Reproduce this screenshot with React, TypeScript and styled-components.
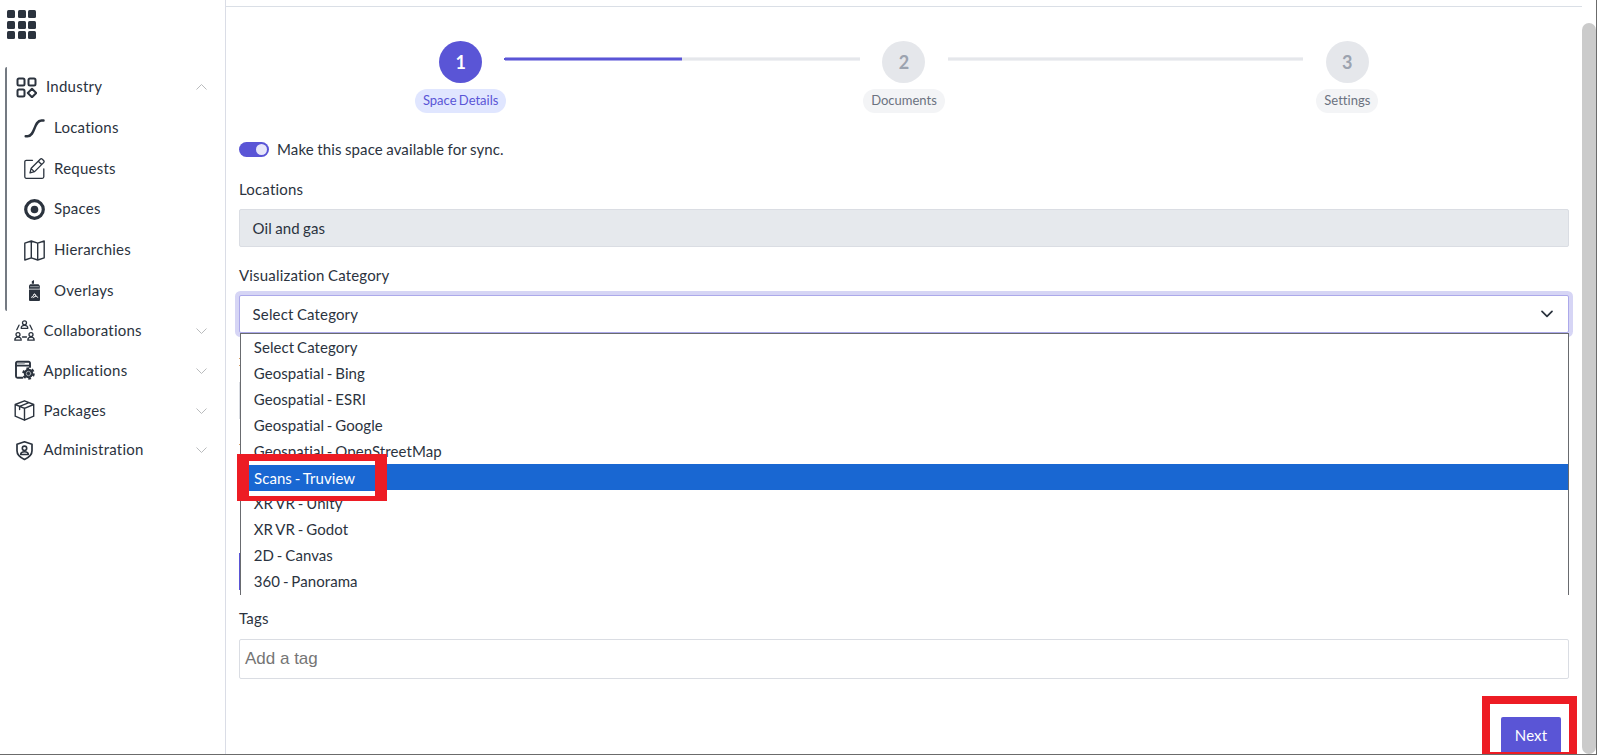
import React from 'react';
import styled, { createGlobalStyle } from 'styled-components';

const Global = createGlobalStyle`
  *{box-sizing:border-box}
  body{margin:0;background:#fff;font-family:Lato,"Liberation Sans",sans-serif;font-size:15px;line-height:24px;color:#2b3340;overflow:hidden;
    font-variant-ligatures:none;letter-spacing:.1px;word-spacing:-.6px}
`;
const Page = styled.div`
  display:flex;width:1597px;height:755px;overflow:hidden;
  border-right:1px solid #6b6b6b;border-bottom:1px solid #6b6b6b;
`;
const Sidebar = styled.nav`
  width:226px;flex:none;border-right:1px solid #dadde6;display:flex;flex-direction:column;color:#2b333e;
`;
const Logo = styled.div`
  display:grid;grid-template-columns:repeat(3,8px);gap:2.5px;margin:10px 0 28px 7px;height:29px;
`;
const Dot = styled.i`height:8px;border-radius:1.5px;background:#2b333e;`;
const Group = styled.div`border-left:2px solid #747a82;border-radius:2px;margin-left:5px;height:244px;`;
const NavRow = styled.div<{ $h?: number; $pl: number; $gap: number }>`
  display:flex;align-items:center;height:${p => p.$h ?? 40}px;padding:0 18px 0 ${p => p.$pl}px;gap:${p => p.$gap}px;
  svg{flex:none}
`;
const NavText = styled.span`flex:1;white-space:nowrap;padding-bottom:2px;letter-spacing:.24px;`;
const Content = styled.main`
  width:1356px;flex:none;display:flex;flex-direction:column;padding:0 13px;
  & > *{flex:none}
`;
const TopLine = styled.div`height:7px;border-bottom:1px solid #dadfe6;margin:0 -13px;`;
const Stepper = styled.div`display:grid;grid-template-columns:repeat(3,1fr);height:106px;padding-top:34px;`;
const Step = styled.div`display:flex;flex-direction:column;align-items:center;position:relative;`;
const Circle = styled.div<{ $on?: boolean }>`
  width:43px;height:42px;border-radius:50%;display:flex;align-items:center;justify-content:center;
  font-size:18px;font-weight:700;background:${p => (p.$on ? '#5a55d6' : '#e5e7eb')};color:${p => (p.$on ? '#fff' : '#9ca3af')};
`;
const Pill = styled.div<{ $on?: boolean }>`
  margin-top:6px;height:24px;line-height:22px;border-radius:12px;padding:0 8px;font-size:13px;letter-spacing:0;word-spacing:-1px;
  background:${p => (p.$on ? '#e0e6ff' : '#f3f4f6')};color:${p => (p.$on ? '#5a55d6' : '#6b7280')};
`;
const Track = styled.div`
  position:absolute;top:17px;left:60%;width:80%;height:2px;background:#e5e7eb;box-shadow:0 1px #eff0f3,0 -1px #eff0f3;
`;
const Fill = styled.div`width:50%;height:100%;background:#5a55d6;box-shadow:0 1px #a9a6ea,0 -1px #a9a6ea,-1px 0 #5a55d6;`;
const SyncRow = styled.div`display:flex;align-items:center;gap:8px;height:24px;margin-top:24px;letter-spacing:.13px;`;
const Toggle = styled.div`
  width:30px;height:15px;margin-top:1px;border-radius:8px;background:#5a55d6;display:flex;align-items:center;justify-content:flex-end;padding-right:2px;
`;
const Knob = styled.i`width:11px;height:11px;border-radius:50%;background:#e7e6fa;`;
const Label = styled.label<{ $mt: number }>`margin-top:${p => p.$mt}px;height:24px;display:block;letter-spacing:.18px;`;
const Field = styled.div`
  height:38px;margin-top:8px;border:1px solid #dadde3;border-radius:2px;background:#e6e9ed;padding:0 12.6px;display:flex;align-items:center;
`;
const SelectWrap = styled.div`position:relative;margin-top:8px;height:38px;`;
const SelectBox = styled.div`
  height:38px;border:1px solid #aca9ea;border-radius:2px;box-shadow:0 0 0 4px #d6d5f5;background:#fff;
  display:flex;align-items:center;justify-content:space-between;padding:0 15px 0 12.6px;letter-spacing:.15px;
`;
const Menu = styled.div`
  position:absolute;z-index:2;left:1px;right:0;top:38px;height:262px;background:#fff;border:1px solid #696b6f;border-bottom:0;letter-spacing:.07px;word-spacing:-1.1px;
`;
const Option = styled.div<{ $on?: boolean }>`
  height:26px;line-height:26px;padding-left:12.8px;background:${p => (p.$on ? '#1967d2' : '#fff')};color:${p => (p.$on ? '#fff' : 'inherit')};
`;
const Callout = styled.div`
  position:absolute;left:-4px;top:120px;width:150px;height:47px;border:solid #ed1c24;border-width:7px 12px 5px;background:#fff;padding-top:4px;
`;
const CalloutRow = styled.div`height:26px;line-height:26px;background:#1967d2;color:#fff;padding-left:5px;`;
const Covered = styled.div`height:261px;position:relative;`;
const Sliver = styled.i<{ $y: number; $h: number; $c: string }>`
  position:absolute;left:0;width:2px;top:${p => p.$y}px;height:${p => p.$h}px;background:${p => p.$c};
`;
const TagInput = styled.div`
  height:40px;margin-top:9px;border:1px solid #dadde3;border-radius:2px;padding:0 5px;display:flex;align-items:center;
  font-family:"Liberation Sans",Arial,sans-serif;font-size:17px;letter-spacing:0;word-spacing:0;color:#757575;
`;
const Footer = styled.div`display:flex;justify-content:flex-end;margin-top:17px;margin-right:-8px;`;
const NextMark = styled.div`width:95px;height:59px;border:8px solid #ed1c24;border-bottom-width:3px;padding:13px 8px 0 11px;display:flex;`;
const NextButton = styled.div`
  width:60px;height:35px;background:#5a55d6;color:#fff;border-radius:2px 2px 0 0;text-align:center;line-height:37px;
`;
const Gutter = styled.div`width:14px;flex:none;padding-top:23px;`;
const Thumb = styled.div`height:731px;border-radius:7px;background:#cbcbcb;`;

const Svg = ({ children }: { children: React.ReactNode }) => (
  <svg width="21" height="21" viewBox="0 0 21 21" fill="none" stroke="#2b333e" strokeLinecap="round" strokeLinejoin="round">{children}</svg>
);
const Chev = ({ up }: { up?: boolean }) => (
  <svg width="11" height="6" viewBox="0 0 11 6" fill="none" stroke="#b9bbbd" strokeWidth="1"><path d={up ? 'M.5 5.5l5-5 5 5' : 'M.5.5l5 5 5-5'} /></svg>
);
const IndustryIcon = () => (
  <Svg><g strokeWidth="2"><rect x="1.5" y="1.5" width="7" height="7" rx="1.5" /><rect x="12.5" y="1.5" width="7" height="7" rx="1.5" /><rect x="1.5" y="12.5" width="7" height="7" rx="1.5" /><path d="M16 11.7l4.2 4.3-4.2 4.3-4.2-4.3z" /></g></Svg>
);
const CurveIcon = () => (
  <Svg><path strokeWidth="2.5" d="M1.7 18.2h1.8C11.5 18.2 9.5 2.5 17.5 2.5h2" /></Svg>
);
const EditIcon = () => (
  <Svg><path strokeWidth="1.3" d="M8.500 2.300H2.300A1.500 1.500 0 0 0 .8 3.800v15a1.500 1.500 0 0 0 1.500 1.500h16a1.500 1.500 0 0 0 1.500-1.500v-8" /><path strokeWidth="1.300" d="M6 14.800l1.200-4.600L16.200 1.200a1.500 1.500 0 0 1 2.100 0l1.300 1.300a1.500 1.500 0 0 1 0 2.100l-9 9zM14.300 3.200l3.300 3.300M7.200 10.600l3 3" /></Svg>
);
const TargetIcon = () => (
  <Svg><circle cx="10.5" cy="10.5" r="8.8" strokeWidth="3.2" /><circle cx="10.5" cy="10.5" r="3.8" fill="#2b333e" stroke="none" /></Svg>
);
const MapIcon = () => (
  <Svg><path strokeWidth="1.4" d="M.8 3.2L7.3 1l6.4 2.2L20.2 1v16.8L13.7 20l-6.400-2.200L.8 20zM7.300 1v16.800M13.700 3.200V20" /></Svg>
);
const BottleIcon = () => (
  <Svg><g fill="#2b333e" stroke="none"><path d="M7.8 3.8V1.3L10 0v3.800zM6 4.300h8.500l1.300 1.500v3H5V5.800zM5 9.600h11V20a1 1 0 0 1-1 1H6a1 1 0 0 1-1-1z" /><path d="M6.500 6.700h8" stroke="#9aa0a6" strokeWidth="1" /><path d="M7.500 17.300c1-.3 2-1.500 2.500-3.300h1c.3 1.500 1 2.500 2.800 3.300M9 17.500l3-1.500" stroke="#fff" strokeWidth="1" fill="none" /></g></Svg>
);
const PeopleIcon = () => (
  <Svg><g strokeWidth="1.3"><circle cx="10.5" cy="2.8" r="2" /><path d="M7.2 8.3c0-2.2 1.2-3 3.3-3s3.3.8 3.3 3zM5 5.2L2.8 9.7M16 5.2l2.2 4.5M8.5 17h4" /><circle cx="4" cy="14.6" r="2" /><path d="M.8 20.2c0-2.2 1.2-3 3.2-3s3.2.8 3.2 3z" /><circle cx="17" cy="14.6" r="2" /><path d="M13.8 20.2c0-2.2 1.2-3 3.2-3s3.2.8 3.2 3z" /></g></Svg>
);
const AppIcon = () => (
  <Svg><path strokeWidth="1.9" d="M8.5 17.7H3.5a1.5 1.5 0 0 1-1.5-1.5V3a1.3 1.3 0 0 1 1.3-1.3h11.4A1.3 1.3 0 0 1 16 3v4" /><path d="M2 5.6h14" strokeWidth="1.7" /><path d="M4 3.6h6" stroke="#a6abb0" strokeWidth="1.7" /><circle cx="14.5" cy="13.5" r="5.2" strokeWidth="2.2" strokeDasharray="2.7 2.745" strokeLinecap="butt" /><circle cx="14.5" cy="13.5" r="4.7" fill="#2b333e" stroke="none" /><circle cx="14.5" cy="13.5" r="2.2" stroke="#a6abb0" strokeWidth="1" /></Svg>
);
const BoxIcon = () => (
  <Svg><path strokeWidth="1.4" d="M10.5.8l9.2 3.7v11.7l-9.2 4L1.2 16.2V4.5zM1.2 4.5l9.3 3.8 9.2-3.8M10.5 8.3v11.9M5.6 9.5V6.3L15 2.6" /></Svg>
);
const ShieldIcon = () => (
  <Svg><path strokeWidth="1.7" d="M10.5 1.8L18 4.3v6.4c0 4.5-3.7 7-7.5 8.8C6.7 17.7 3 15.2 3 10.7V4.3z" /><circle cx="10.5" cy="8.3" r="2.2" strokeWidth="1.6" /><path strokeWidth="1.6" d="M6.7 14.5c0-2 1.5-2.8 3.8-2.8s3.8.8 3.8 2.8z" /></Svg>
);

const children: [string, () => React.ReactElement][] = [
  ['Locations', CurveIcon], ['Requests', EditIcon], ['Spaces', TargetIcon], ['Hierarchies', MapIcon], ['Overlays', BottleIcon],
];
const sections: [string, () => React.ReactElement][] = [
  ['Collaborations', PeopleIcon], ['Applications', AppIcon], ['Packages', BoxIcon], ['Administration', ShieldIcon],
];
const options = ['Select Category', 'Geospatial - Bing', 'Geospatial - ESRI', 'Geospatial - Google', 'Geospatial - OpenStreetMap', 'Scans - Truview', 'XR VR - Unity', 'XR VR - Godot', '2D - Canvas', '360 - Panorama'];

export default function App() {
  return (
    <Page>
      <Global />
      <Sidebar>
        <Logo>{Array.from({ length: 9 }, (_, i) => <Dot key={i} />)}</Logo>
        <Group>
          <NavRow $h={40.72} $pl={9} $gap={9}><IndustryIcon /><NavText>Industry</NavText><Chev up /></NavRow>
          {children.map(([t, I]) => <NavRow key={t} $h={40.68} $pl={17} $gap={9}><I /><NavText>{t}</NavText></NavRow>)}
        </Group>
        {sections.map(([t, I]) => <NavRow key={t} $h={39.85} $pl={14} $gap={8.6}><I /><NavText>{t}</NavText><Chev /></NavRow>)}
      </Sidebar>
      <Content>
        <TopLine />
        <Stepper>
          <Step><Circle $on>1</Circle><Pill $on>Space Details</Pill><Track><Fill /></Track></Step>
          <Step><Circle>2</Circle><Pill>Documents</Pill><Track /></Step>
          <Step><Circle>3</Circle><Pill>Settings</Pill></Step>
        </Stepper>
        <SyncRow><Toggle><Knob /></Toggle><span>Make this space available for sync.</span></SyncRow>
        <Label $mt={16}>Locations</Label>
        <Field>Oil and gas</Field>
        <Label $mt={16}>Visualization Category</Label>
        <SelectWrap>
          <SelectBox>
            <span>Select Category</span>
            <svg width="12" height="8" viewBox="0 0 12 8" fill="none" stroke="#2b333e" strokeWidth="1.7" strokeLinecap="round" strokeLinejoin="round"><path d="M1 1.3l5 5 5-5" /></svg>
          </SelectBox>
          <Menu>
            {options.map((o, i) => <Option key={o} $on={i === 5}>{o}</Option>)}
            <Callout><CalloutRow>Scans - Truview</CalloutRow></Callout>
          </Menu>
        </SelectWrap>
        <Covered>
          <Sliver $y={25} $h={1} $c="#d9a066" />
          <Sliver $y={32} $h={1} $c="#d9a066" />
          <Sliver $y={49} $h={37} $c="#dadde3" />
          <Sliver $y={111} $h={1} $c="#d9a066" />
          <Sliver $y={220} $h={37} $c="#5a55d6" />
        </Covered>
        <Label $mt={12}>Tags</Label>
        <TagInput>Add a tag</TagInput>
        <Footer><NextMark><NextButton>Next</NextButton></NextMark></Footer>
      </Content>
      <Gutter><Thumb /></Gutter>
    </Page>
  );
}
